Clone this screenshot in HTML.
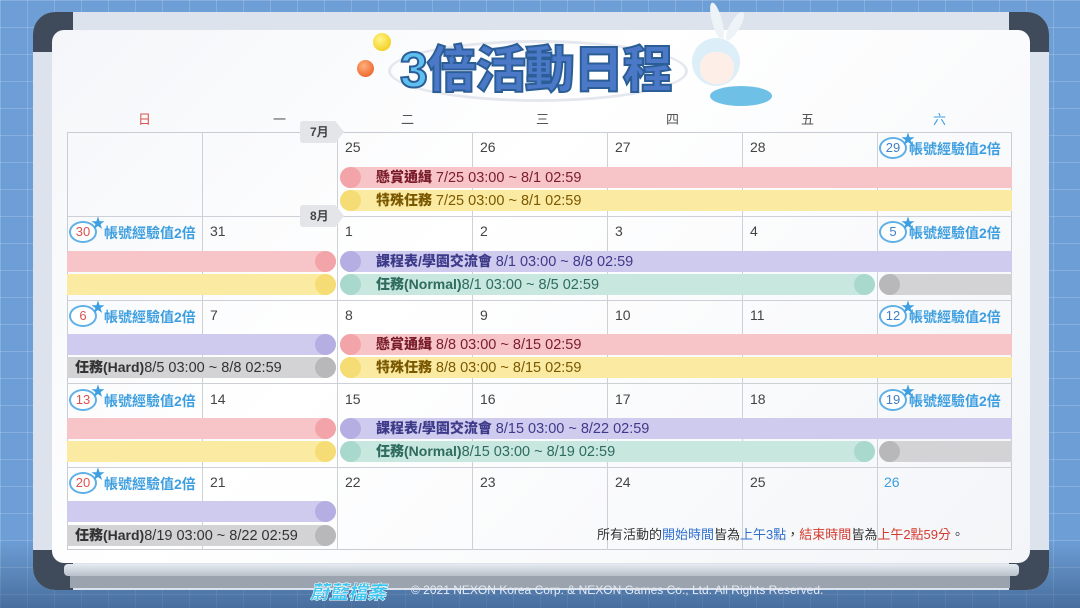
<!DOCTYPE html>
<html><head><meta charset="utf-8"><style>
*{margin:0;padding:0;box-sizing:border-box}
body{width:1080px;height:608px;overflow:hidden;position:relative;font-family:"Liberation Sans","Noto Sans CJK TC",sans-serif;
background-color:#6d9ed6;background-image:linear-gradient(rgba(255,255,255,.18) 1px,transparent 1px),linear-gradient(90deg,rgba(255,255,255,.18) 1px,transparent 1px);background-size:27px 27px}
.abs{position:absolute}
.frame{left:33px;top:12px;width:1016px;height:578px;background:#dce3ec;border-radius:22px}
.corner{width:40px;height:40px;background:#3f4a5b}
.board{left:52px;top:30px;width:978px;height:533px;background:linear-gradient(135deg,#f4f6f9,#fff 40%,#f3f5f8);border-radius:12px}
.grid{left:67px;top:132px;width:945px;height:418px;border:1px solid #c9ccd2}
.vl{top:132px;width:1px;height:418px;background:#cdd0d6}
.hl{left:67px;width:945px;height:1px;background:#cdd0d6}
.dow{top:109px;font-size:13px;color:#555;width:135px;text-align:center}
.num{font-size:14px;color:#444}
.bar{height:21px;border-radius:11px;font-size:14px;line-height:21px;white-space:nowrap;font-weight:bold}
.c{position:absolute;top:0;width:21px;height:21px;border-radius:50%}
.pk{background:#f7c5c8}.pk .c{background:#f3a4a9}
.ye{background:#fbeaa2}.ye .c{background:#f6dc74}
.pu{background:#cfcbee}.pu .c{background:#b5aee2}
.gr{background:#c7e7df}.gr .c{background:#a9d8cc}
.gy{background:#d3d3d5}.gy .c{background:#b8b8ba}
.t{position:absolute;left:36px;top:0}
.t span{font-weight:normal;font-size:14.5px}
.badge{font-size:14px;font-weight:bold;color:#3d9fe0}
.ring{position:absolute;width:28px;height:22px;border:2px solid #5fb0e6;border-radius:50%;background:#fff;font-size:13px;text-align:center;line-height:18px;font-weight:normal}
.star{position:absolute;color:#3d9fe0;font-size:14px}
.tag{width:44px;height:22px;background:#e3e5e9;font-size:12px;font-weight:bold;color:#444;line-height:22px;padding-left:10px;clip-path:polygon(0 0,80% 0,100% 50%,80% 100%,0 100%);border-radius:3px}
</style></head><body>
<div class="abs" style="left:0;top:540px;width:1080px;height:68px;background:linear-gradient(rgba(40,70,110,0),rgba(40,70,110,.55))"></div>
<div class="abs frame"></div>
<div class="abs corner" style="left:33px;top:12px;border-radius:22px 0 0 0"></div>
<div class="abs corner" style="left:1009px;top:12px;border-radius:0 22px 0 0"></div>
<div class="abs corner" style="left:33px;top:550px;border-radius:0 0 0 22px"></div>
<div class="abs corner" style="left:1009px;top:550px;border-radius:0 0 22px 0"></div>
<div class="abs" style="left:70px;top:566px;width:940px;height:22px;background:#9aa3ae"></div>
<div class="abs board"></div>
<div class="abs" style="left:64px;top:564px;width:955px;height:12px;background:linear-gradient(#e6ebf1,#b9c1cb);border-radius:4px"></div>

<div class="abs" style="left:373px;top:33px;width:18px;height:18px;border-radius:50%;background:radial-gradient(circle at 40% 35%,#fff58a,#f1c400)"></div>
<div class="abs" style="left:357px;top:60px;width:17px;height:17px;border-radius:50%;background:radial-gradient(circle at 40% 35%,#ffb07a,#e8501b)"></div>
<div class="abs" style="left:388px;top:40px;width:300px;height:62px;border:3px solid #e4e8ee;border-radius:50%;"></div>
<div class="abs" style="left:400px;top:40px;font-size:50px;font-weight:900;letter-spacing:-1px;-webkit-text-stroke:2px #2b5e96;line-height:60px"><span style="color:#5fc0f0">3</span><span style="color:#4b79c8">倍活動日程</span></div>
<div class="abs" style="left:692px;top:38px;width:48px;height:48px;border-radius:50%;background:#dceef8"></div>
<div class="abs" style="left:700px;top:52px;width:34px;height:32px;border-radius:45%;background:#fdeee8"></div>
<div class="abs" style="left:712px;top:2px;width:10px;height:38px;border-radius:50%;background:#eef3f8;transform:rotate(-15deg)"></div>
<div class="abs" style="left:730px;top:10px;width:10px;height:32px;border-radius:50%;background:#eef3f8;transform:rotate(30deg)"></div>
<div class="abs" style="left:710px;top:86px;width:62px;height:20px;border-radius:50%;background:#6fc0e6"></div>

<div class="abs dow" style="left:77px;color:#d9534f">日</div>
<div class="abs dow" style="left:212px">一</div>
<div class="abs dow" style="left:340px">二</div>
<div class="abs dow" style="left:475px">三</div>
<div class="abs dow" style="left:605px">四</div>
<div class="abs dow" style="left:740px">五</div>
<div class="abs dow" style="left:872px;color:#3d9fe0">六</div>

<div class="abs grid"></div>
<div class="abs vl" style="left:202px"></div><div class="abs vl" style="left:337px"></div><div class="abs vl" style="left:472px"></div><div class="abs vl" style="left:607px"></div><div class="abs vl" style="left:742px"></div><div class="abs vl" style="left:877px"></div>
<div class="abs hl" style="top:216px"></div><div class="abs hl" style="top:300px"></div><div class="abs hl" style="top:383px"></div><div class="abs hl" style="top:467px"></div>

<div class="abs tag" style="left:300px;top:121px">7月</div>
<div class="abs tag" style="left:300px;top:205px">8月</div>

<div class="abs num" style="left:345px;top:139px">25</div><div class="abs num" style="left:480px;top:139px">26</div><div class="abs num" style="left:615px;top:139px">27</div><div class="abs num" style="left:750px;top:139px">28</div>
<div class="abs num" style="left:210px;top:223px">31</div><div class="abs num" style="left:345px;top:223px">1</div><div class="abs num" style="left:480px;top:223px">2</div><div class="abs num" style="left:615px;top:223px">3</div><div class="abs num" style="left:750px;top:223px">4</div>
<div class="abs num" style="left:210px;top:307px">7</div><div class="abs num" style="left:345px;top:307px">8</div><div class="abs num" style="left:480px;top:307px">9</div><div class="abs num" style="left:615px;top:307px">10</div><div class="abs num" style="left:750px;top:307px">11</div>
<div class="abs num" style="left:210px;top:391px">14</div><div class="abs num" style="left:345px;top:391px">15</div><div class="abs num" style="left:480px;top:391px">16</div><div class="abs num" style="left:615px;top:391px">17</div><div class="abs num" style="left:750px;top:391px">18</div>
<div class="abs num" style="left:210px;top:474px">21</div><div class="abs num" style="left:345px;top:474px">22</div><div class="abs num" style="left:480px;top:474px">23</div><div class="abs num" style="left:615px;top:474px">24</div><div class="abs num" style="left:750px;top:474px">25</div><div class="abs num" style="left:884px;top:474px;color:#3d9fe0">26</div>

<div class="abs badge" style="left:879px;top:137px;width:135px;height:26px"><div class="ring" style="left:0;top:0;color:#3d7fc9">29</div><div class="star" style="left:22px;top:-8px">★</div><div style="position:absolute;left:30px;top:2px">帳號經驗值2倍</div></div>
<div class="abs badge" style="left:69px;top:221px;width:135px;height:26px"><div class="ring" style="left:0;top:0;color:#d9534f">30</div><div class="star" style="left:22px;top:-8px">★</div><div style="position:absolute;left:35px;top:2px">帳號經驗值2倍</div></div>
<div class="abs badge" style="left:879px;top:221px;width:135px;height:26px"><div class="ring" style="left:0;top:0;color:#3d7fc9">5</div><div class="star" style="left:22px;top:-8px">★</div><div style="position:absolute;left:30px;top:2px">帳號經驗值2倍</div></div>
<div class="abs badge" style="left:69px;top:305px;width:135px;height:26px"><div class="ring" style="left:0;top:0;color:#d9534f">6</div><div class="star" style="left:22px;top:-8px">★</div><div style="position:absolute;left:35px;top:2px">帳號經驗值2倍</div></div>
<div class="abs badge" style="left:879px;top:305px;width:135px;height:26px"><div class="ring" style="left:0;top:0;color:#3d7fc9">12</div><div class="star" style="left:22px;top:-8px">★</div><div style="position:absolute;left:30px;top:2px">帳號經驗值2倍</div></div>
<div class="abs badge" style="left:69px;top:389px;width:135px;height:26px"><div class="ring" style="left:0;top:0;color:#d9534f">13</div><div class="star" style="left:22px;top:-8px">★</div><div style="position:absolute;left:35px;top:2px">帳號經驗值2倍</div></div>
<div class="abs badge" style="left:879px;top:389px;width:135px;height:26px"><div class="ring" style="left:0;top:0;color:#3d7fc9">19</div><div class="star" style="left:22px;top:-8px">★</div><div style="position:absolute;left:30px;top:2px">帳號經驗值2倍</div></div>
<div class="abs badge" style="left:69px;top:472px;width:135px;height:26px"><div class="ring" style="left:0;top:0;color:#d9534f">20</div><div class="star" style="left:22px;top:-8px">★</div><div style="position:absolute;left:35px;top:2px">帳號經驗值2倍</div></div>

<div class="abs bar pk" style="left:340px;top:167px;width:672px;border-radius:11px 0 0 11px;color:#7a1d2a"><div class="c" style="left:0"></div><div class="t"><b>懸賞通緝</b> <span>7/25 03:00 ~ 8/1 02:59</span></div></div>
<div class="abs bar ye" style="left:340px;top:190px;width:672px;border-radius:11px 0 0 11px;color:#7a5800"><div class="c" style="left:0"></div><div class="t"><b>特殊任務</b> <span>7/25 03:00 ~ 8/1 02:59</span></div></div>
<div class="abs bar pk" style="left:67px;top:251px;width:269px;border-radius:0 11px 11px 0"><div class="c" style="right:0"></div></div>
<div class="abs bar ye" style="left:67px;top:274px;width:269px;border-radius:0 11px 11px 0"><div class="c" style="right:0"></div></div>
<div class="abs bar pu" style="left:340px;top:251px;width:672px;border-radius:11px 0 0 11px;color:#3e3a8a"><div class="c" style="left:0"></div><div class="t"><b>課程表/學園交流會</b> <span>8/1 03:00 ~ 8/8 02:59</span></div></div>
<div class="abs bar gr" style="left:340px;top:274px;width:535px;color:#2f6b5e"><div class="c" style="left:0"></div><div class="c" style="right:0"></div><div class="t"><b>任務(Normal)</b><span>8/1 03:00 ~ 8/5 02:59</span></div></div>
<div class="abs bar gy" style="left:879px;top:274px;width:133px;border-radius:11px 0 0 11px"><div class="c" style="left:0"></div></div>
<div class="abs bar pu" style="left:67px;top:334px;width:269px;border-radius:0 11px 11px 0"><div class="c" style="right:0"></div></div>
<div class="abs bar gy" style="left:67px;top:357px;width:269px;border-radius:0 11px 11px 0;color:#333"><div class="c" style="right:0"></div><div class="t" style="left:8px"><b>任務(Hard)</b><span>8/5 03:00 ~ 8/8 02:59</span></div></div>
<div class="abs bar pk" style="left:340px;top:334px;width:672px;border-radius:11px 0 0 11px;color:#7a1d2a"><div class="c" style="left:0"></div><div class="t"><b>懸賞通緝</b> <span>8/8 03:00 ~ 8/15 02:59</span></div></div>
<div class="abs bar ye" style="left:340px;top:357px;width:672px;border-radius:11px 0 0 11px;color:#7a5800"><div class="c" style="left:0"></div><div class="t"><b>特殊任務</b> <span>8/8 03:00 ~ 8/15 02:59</span></div></div>
<div class="abs bar pk" style="left:67px;top:418px;width:269px;border-radius:0 11px 11px 0"><div class="c" style="right:0"></div></div>
<div class="abs bar ye" style="left:67px;top:441px;width:269px;border-radius:0 11px 11px 0"><div class="c" style="right:0"></div></div>
<div class="abs bar pu" style="left:340px;top:418px;width:672px;border-radius:11px 0 0 11px;color:#3e3a8a"><div class="c" style="left:0"></div><div class="t"><b>課程表/學園交流會</b> <span>8/15 03:00 ~ 8/22 02:59</span></div></div>
<div class="abs bar gr" style="left:340px;top:441px;width:535px;color:#2f6b5e"><div class="c" style="left:0"></div><div class="c" style="right:0"></div><div class="t"><b>任務(Normal)</b><span>8/15 03:00 ~ 8/19 02:59</span></div></div>
<div class="abs bar gy" style="left:879px;top:441px;width:133px;border-radius:11px 0 0 11px"><div class="c" style="left:0"></div></div>
<div class="abs bar pu" style="left:67px;top:501px;width:269px;border-radius:0 11px 11px 0"><div class="c" style="right:0"></div></div>
<div class="abs bar gy" style="left:67px;top:525px;width:269px;border-radius:0 11px 11px 0;color:#333"><div class="c" style="right:0"></div><div class="t" style="left:8px"><b>任務(Hard)</b><span>8/19 03:00 ~ 8/22 02:59</span></div></div>

<div class="abs" style="left:597px;top:524px;font-size:13px;color:#333;white-space:nowrap">所有活動的<span style="color:#2f6fd0">開始時間</span>皆為<span style="color:#2f6fd0">上午3點</span>，<span style="color:#d43a2f">結束時間</span>皆為<span style="color:#d43a2f">上午2點59分</span>。</div>

<div class="abs" style="left:310px;top:578px;font-size:19px;font-weight:900;font-style:italic;color:#3ec6f0;-webkit-text-stroke:.5px #fff">蔚藍檔案</div>
<div class="abs" style="left:411px;top:583px;font-size:12px;color:#e4ebf4">© 2021 NEXON Korea Corp. &amp; NEXON Games Co., Ltd. All Rights Reserved.</div>
</body></html>
